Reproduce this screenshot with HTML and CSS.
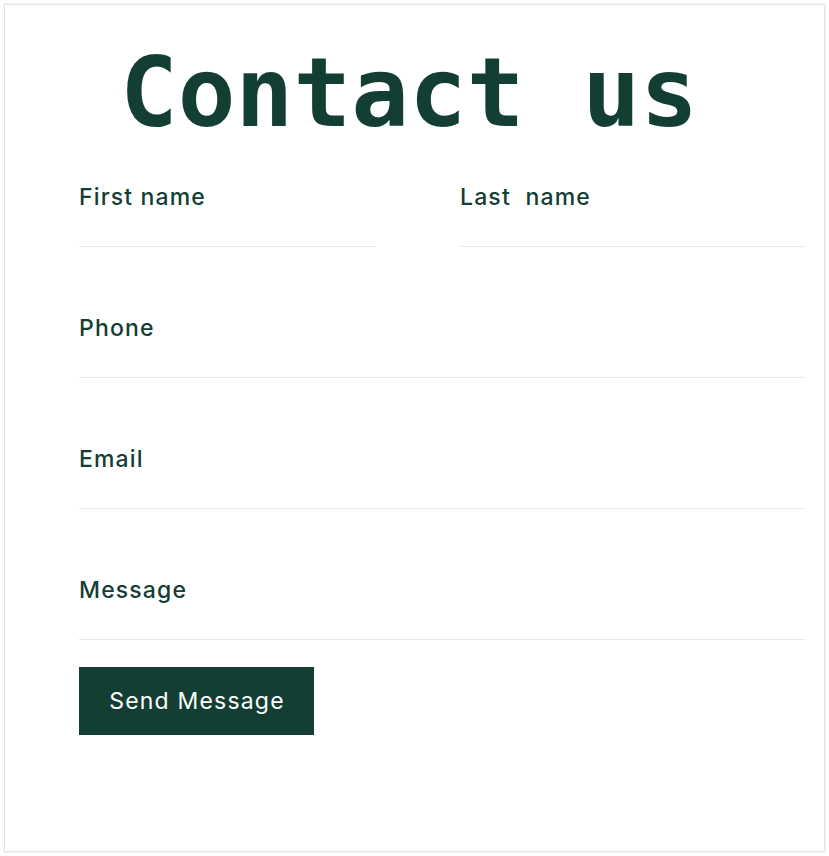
FILE: index.html
```html
<!DOCTYPE html>
<html lang="en">
<head>
<meta charset="utf-8">
<title>Contact us</title>
<link rel="stylesheet" href="styles.css">
</head>
<body>
<main class="card">
  <h1 class="title">Contact us</h1>
  <form class="form">
    <div class="row">
      <div class="field field-first">
        <label class="label">First name</label>
        <div class="input"></div>
      </div>
      <div class="field field-last">
        <label class="label">Last&nbsp; name</label>
        <div class="input"></div>
      </div>
    </div>
    <div class="field">
      <label class="label">Phone</label>
      <div class="input"></div>
    </div>
    <div class="field">
      <label class="label">Email</label>
      <div class="input"></div>
    </div>
    <div class="field">
      <label class="label">Message</label>
      <div class="input"></div>
    </div>
    <button type="button" class="btn">Send Message</button>
  </form>
</main>
</body>
</html>
```
FILE: styles.css
```css
* { box-sizing: border-box; }
html, body { margin: 0; padding: 0; background: #fff; }
body { padding: 4px; }
.card {
  height: 848px;
  border: 1px solid #e3e3e3;
  box-shadow: 0 0 3px rgba(0,0,0,0.08);
  background: #fff;
  padding: 0 19px 0 74px;
}
.title {
  margin: 0;
  padding-top: 28px;
  height: 175px;
  font-family: "DejaVu Sans Mono", monospace;
  font-weight: bold;
  font-size: 96px;
  line-height: 120px;
  color: #133e33;
  padding-left: 41px;
}
.form { display: flex; flex-direction: column; }
.row { display: flex; gap: 84px; }
.field-first { width: 297px; }
.field-last { flex: 1; }
.field { border-bottom: 1px solid #e6e6e6; margin-bottom: 64px; }
.label {
  display: block;
  padding-top: 2px;
  font-family: "Inter", sans-serif;
  font-weight: 500;
  font-size: 23px;
  letter-spacing: 1.15px;
  line-height: 30px;
  color: #133e33;
}
.input { height: 34px; }
.form > .field:last-of-type { margin-bottom: 27px; }
.btn {
  align-self: flex-start;
  width: 235px;
  height: 68px;
  border: none;
  background: #133e33;
  color: #fff;
  font-family: "Inter", sans-serif;
  font-size: 23px;
  letter-spacing: 1.2px;
  padding: 0 0 0 1px;
}
```
